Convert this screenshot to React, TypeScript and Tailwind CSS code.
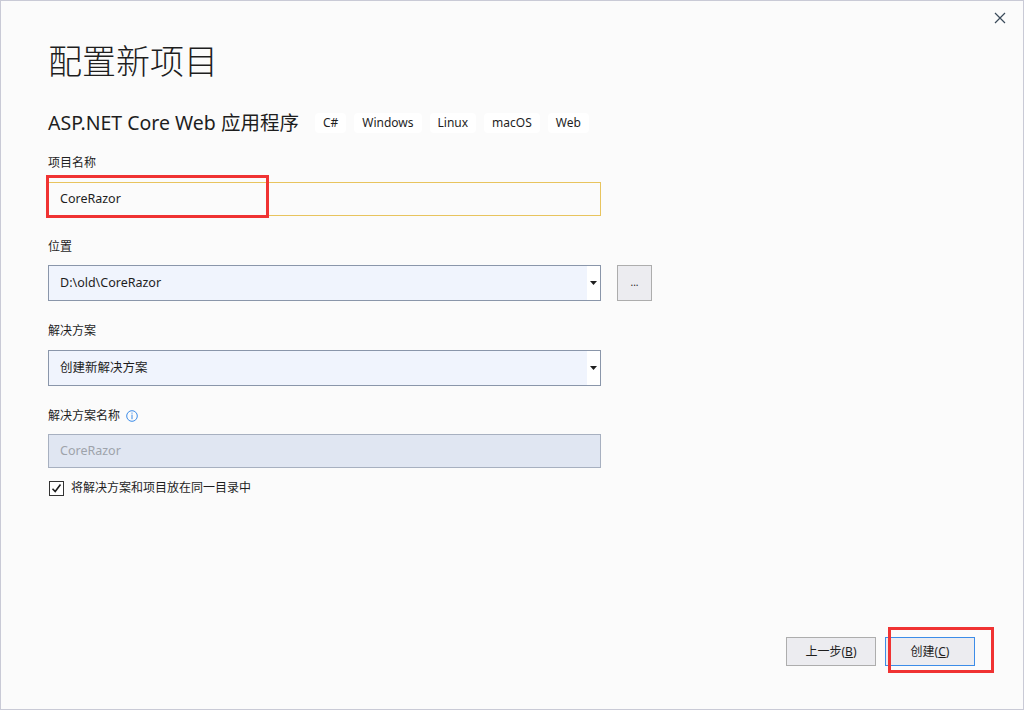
import React from "react";

const FONT = { fontFamily: '"Noto Sans", "Noto Sans CJK SC", sans-serif' };

function Tag({ children }: { children: React.ReactNode }) {
  return (
    <span className="h-[20px] px-[8px] flex items-center bg-white rounded-[4px] text-[12px] text-[#1e1e1e]">
      {children}
    </span>
  );
}

function Caret() {
  return (
    <svg width="7" height="4" viewBox="0 0 7 4">
      <path d="M0 0 L7 0 L3.5 4 Z" fill="#1e1e1e" />
    </svg>
  );
}

function Combo({ value }: { value: string }) {
  return (
    <div className="w-[553px] h-[36px] border border-[#8a96aa] bg-[#f0f4fd] flex">
      <div className="flex-1 flex items-center pl-[11px] text-[12.5px] text-[#1e1e1e]">{value}</div>
      <div className="w-[13px] bg-white flex items-center justify-center">
        <Caret />
      </div>
    </div>
  );
}

export default function App() {
  return (
    <div
      className="relative w-[1024px] h-[710px] bg-[#fbfbfb] border border-[#c9cad6] flex flex-col text-[#1e1e1e]"
      style={FONT}
    >
      {/* close */}
      <div className="absolute top-[11px] right-[17px] w-[12px] h-[12px]">
        <svg width="12" height="12" viewBox="0 0 12 12">
          <path d="M1 1 L11 11 M11 1 L1 11" stroke="#3a4a5a" strokeWidth="1.2" />
        </svg>
      </div>

      <div className="flex-1 flex flex-col pl-[47px] pt-[38px]">
        <h1 className="text-[34px] leading-[44px] font-light text-[#1e1e1e]">配置新项目</h1>

        <div className="mt-[26px] flex items-center">
          <span className="text-[19.5px] leading-[28px]">ASP.NET Core Web 应用程序</span>
          <div className="ml-[16px] flex gap-[8px]">
            <Tag>C#</Tag>
            <Tag>Windows</Tag>
            <Tag>Linux</Tag>
            <Tag>macOS</Tag>
            <Tag>Web</Tag>
          </div>
        </div>

        <div className="mt-[17px] text-[12px] leading-[18px]">项目名称</div>
        <div className="mt-[10px] w-[553px] h-[34px] border border-[#e8c45e] bg-[#fbfbfb] flex items-center pl-[11px] text-[12.5px]">
          CoreRazor
        </div>

        <div className="mt-[22px] text-[12px] leading-[18px]">位置</div>
        <div className="mt-[9px] flex gap-[16px]">
          <Combo value="D:\old\CoreRazor" />
          <div className="w-[35px] h-[36px] border border-[#adadad] bg-[#ececf0] flex items-center justify-center text-[10px] leading-none pb-[2px]">
            ...
          </div>
        </div>

        <div className="mt-[21px] text-[12px] leading-[18px]">解决方案</div>
        <div className="mt-[10px]">
          <Combo value="创建新解决方案" />
        </div>

        <div className="mt-[21px] flex items-center gap-[6px] text-[12px] leading-[18px]">
          <span>解决方案名称</span>
          <svg width="12" height="12" viewBox="0 0 12 12">
            <circle cx="6" cy="6" r="5.3" fill="none" stroke="#3c8ce8" strokeWidth="1" />
            <rect x="5.5" y="2.6" width="1" height="1.1" fill="#3c8ce8" />
            <rect x="5.5" y="4.6" width="1" height="4.6" fill="#3c8ce8" />
          </svg>
        </div>
        <div className="mt-[9px] w-[553px] h-[34px] border border-[#a7b0c0] bg-[#e0e6f2] flex items-center pl-[11px] text-[12.5px] text-[#9ea3ab]">
          CoreRazor
        </div>

        <div className="mt-[11px] flex items-center gap-[7px]">
          <div className="w-[15px] h-[15px] border border-[#333] bg-white flex items-center justify-center ml-[1px]">
            <svg width="11" height="11" viewBox="0 0 11 11">
              <path d="M1.5 5.8 L4.2 8.6 L9.5 1.5" fill="none" stroke="#1e1e1e" strokeWidth="1.6" />
            </svg>
          </div>
          <span className="text-[12px] leading-[18px]">将解决方案和项目放在同一目录中</span>
        </div>
      </div>

      <div className="flex justify-end gap-[9px] pr-[48px] pb-[43px]">
        <button className="w-[90px] h-[29px] border border-[#adadad] bg-[#ececf0] text-[12px] flex items-center justify-center">
          上一步(<span className="underline">B</span>)
        </button>
        <button className="w-[90px] h-[29px] border border-[#3c8ce8] bg-[#ececf0] text-[12px] flex items-center justify-center">
          创建(<span className="underline">C</span>)
        </button>
      </div>

      {/* red annotation boxes */}
      <div className="absolute left-[45px] top-[174px] w-[223px] h-[43px] border-[3px] border-[#f03333]" />
      <div className="absolute left-[887px] top-[626px] w-[106px] h-[46px] border-[3px] border-[#f03333]" />
    </div>
  );
}
